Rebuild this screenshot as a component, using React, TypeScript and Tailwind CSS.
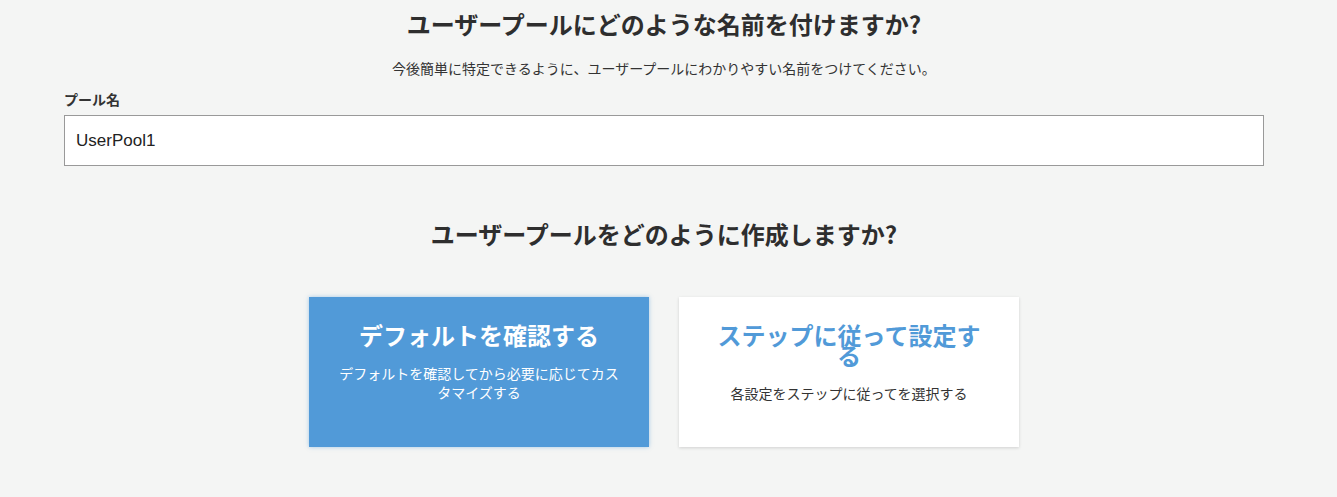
import React from "react";

const jp = '"Noto Sans CJK JP", "Noto Sans", sans-serif';

export default function App() {
  return (
    <div className="min-h-[497px] bg-[#f4f5f4] text-[#333]" style={{ fontFamily: jp }}>
      <div className="ml-[64px] w-[1200px] flex flex-col">
        <h1 className="mt-[10px] text-center text-[24px] font-bold leading-[28px] text-[#2e2e2e]">
          ユーザープールにどのような名前を付けますか?
        </h1>
        <p className="mt-[20px] text-center text-[14px] leading-[20px] text-[#333]">
          今後簡単に特定できるように、ユーザープールにわかりやすい名前をつけてください。
        </p>
        <label className="mt-[11px] text-[14px] font-bold leading-[20px] text-[#333]">プール名</label>
        <input
          readOnly
          value="UserPool1"
          className="mt-[6px] h-[51px] w-full border border-[#999] bg-white px-[11px] text-[17px] text-[#222] outline-none"
          style={{ fontFamily: '"Liberation Sans", Arial, sans-serif' }}
        />
        <h2 className="mt-[54px] text-center text-[24px] font-bold leading-[28px] text-[#2e2e2e]">
          ユーザープールをどのように作成しますか?
        </h2>
        <div className="mt-[49px] flex justify-center gap-[30px]">
          <div className="flex h-[150px] w-[340px] flex-col items-center bg-[#519ad8] px-[28px] pt-[28px] text-center text-white shadow-[0_0_4px_rgba(81,154,216,0.5)]">
            <div className="text-[24px] font-bold leading-[20px]">デフォルトを確認する</div>
            <div className="mt-[19px] text-[14px] leading-[19px]">
              デフォルトを確認してから必要に応じてカスタマイズする
            </div>
          </div>
          <div className="flex h-[150px] w-[340px] flex-col items-center bg-white px-[28px] pt-[28px] text-center shadow-[0_1px_3px_rgba(0,0,0,0.15)]">
            <div className="text-[24px] font-bold leading-[20px] text-[#519ad8]">ステップに従って設定する</div>
            <div className="mt-[19px] text-[14px] leading-[19px] text-[#333]">
              各設定をステップに従ってを選択する
            </div>
          </div>
        </div>
      </div>
    </div>
  );
}
